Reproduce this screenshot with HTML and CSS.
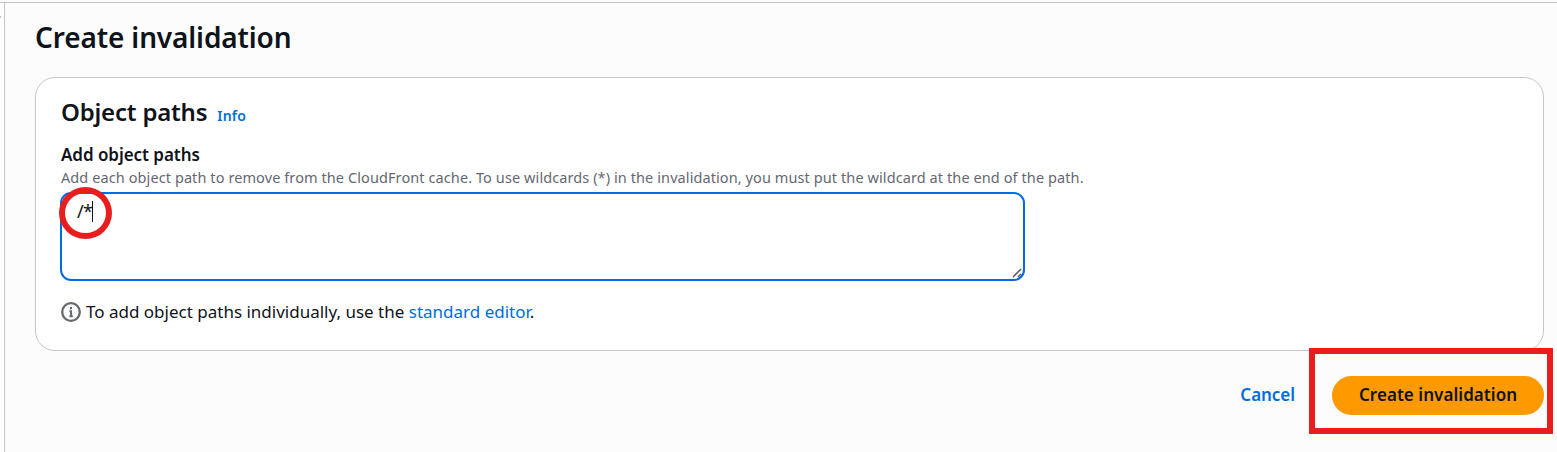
FILE: index.html
```html
<!DOCTYPE html>
<html lang="en">
<head>
<meta charset="utf-8">
<title>Create invalidation</title>
<link rel="stylesheet" href="styles.css">
</head>
<body>
<div class="shell">
  <aside class="side"><span class="side-mark"></span></aside>
  <main class="main">
    <h1 class="title">Create invalidation</h1>
    <section class="card">
      <div class="card-head">
        <h2 class="heading">Object paths</h2>
        <a class="info">Info</a>
      </div>
      <div class="label">Add object paths</div>
      <div class="desc">Add each object path to remove from the CloudFront cache. To use wildcards (*) in the invalidation, you must put the wildcard at the end of the path.</div>
      <div class="field">
        <span class="value">/*</span><span class="caret"></span>
        <span class="ring"></span>
        <svg class="grip" width="10" height="10" viewBox="0 0 10 10"><path d="M1 9L9 1M6 9L9 6" fill="none" stroke="#555" stroke-width="1.5"/></svg>
      </div>
      <div class="hint">
        <svg class="hint-icon" width="20" height="20" viewBox="0 0 20 20"><circle cx="10" cy="10" r="8.8" fill="none" stroke="#656871" stroke-width="2.3"/><path d="M10 5v2.3M8.4 9.2h1.7v5.2M8.4 14.2h3.4" fill="none" stroke="#656871" stroke-width="2"/></svg>
        <span class="hint-text">To add object paths individually, use the <a class="link">standard editor</a>.</span>
      </div>
    </section>
    <div class="actions">
      <a class="cancel">Cancel</a>
      <div class="submit-wrap"><button class="submit">Create invalidation</button><span class="frame"></span></div>
    </div>
  </main>
</div>
</body>
</html>
```

FILE: styles.css
```css
* { box-sizing: border-box; }
body { margin: 0; height: 452px; overflow: hidden; background: #fcfcfd; color: #0f141a; font-family: "Noto Sans", "Open Sans", sans-serif; white-space: nowrap; }
.shell { display: flex; height: 450px; margin-top: 2px; border-top: 1px solid #c6c6cd; }
.side { width: 5px; border-right: 1px solid #c6c6cd; background: #fff; padding-top: 13px; }
.side-mark { display: block; width: 1px; height: 2px; background: #b6bec9; }
.main { flex: 1; padding: 14px 13px 0 30px; }
.title { margin: 0; height: 40px; line-height: 40px; font-size: 28px; font-weight: 650; letter-spacing: -0.13px; }
.card { margin-top: 20px; height: 274px; padding: 19px 25px 0; border: 1px solid #c6c6cd; border-radius: 20px; background: #fff; }
.card-head { display: flex; align-items: baseline; gap: 10px; height: 30px; }
.heading { margin: 0; line-height: 30px; font-size: 24px; font-weight: 600; letter-spacing: -0.2px; }
.info { color: #006ce0; font-size: 14px; font-weight: 600; line-height: 20px; letter-spacing: 0.2px; }
.label { margin-top: 15px; height: 25px; line-height: 25px; font-size: 17px; font-weight: 600; letter-spacing: -0.05px; }
.desc { height: 20px; line-height: 20px; color: #656871; font-size: 14.5px; letter-spacing: 0.09px; }
.field { position: relative; display: flex; margin: 5px 0 0 -1px; width: 965px; height: 89px; padding: 5px 0 0 15px; border: 2px solid #006ce0; border-radius: 11px; line-height: 25px; font-size: 18px; }
.value { letter-spacing: -0.8px; }
.caret { width: 1px; height: 21px; margin-top: 2px; background: #0f141a; }
.ring { position: absolute; left: -3px; top: -7px; width: 53px; height: 52px; border: 6px solid #e81e1e; border-radius: 50%; }
.grip { position: absolute; right: 1px; bottom: 1px; }
.hint { display: flex; align-items: center; gap: 5px; margin-top: 18px; height: 26px; line-height: 26px; font-size: 17px; }
.link, .cancel { color: #006ce0; }
.actions { display: flex; justify-content: flex-end; align-items: center; gap: 37px; margin-top: 25px; height: 39px; }
.cancel { position: relative; top: -1px; font-size: 17px; font-weight: 600; letter-spacing: -0.05px; }
.submit-wrap { position: relative; }
.submit { display: block; width: 212px; height: 39px; padding: 0 0 2px; border: 0; border-radius: 20px; background: #f90; color: #0f141a; font: 600 17px "Noto Sans", "Open Sans", sans-serif; letter-spacing: 0.05px; }
.frame { position: absolute; left: -23px; top: -28px; width: 244px; height: 86px; border: 6px solid #e81e1e; }
```
